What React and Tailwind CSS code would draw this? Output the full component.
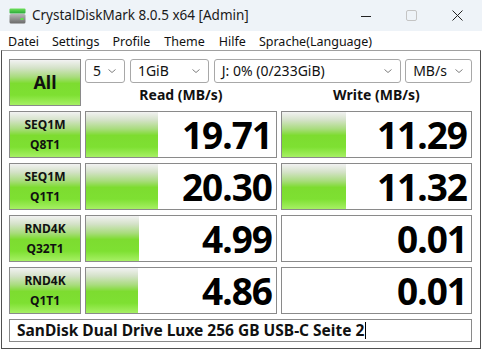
import React from "react";

const GREEN =
  "bg-[linear-gradient(to_bottom,#f2f2f2_0%,#d4e2c8_18%,#a8dc7c_38%,#7ddc30_52%,#7ee032_78%,#a6f064_100%)]";

function Chevron() {
  return (
    <svg width="10" height="6" viewBox="0 0 10 6" className="shrink-0">
      <path d="M1.5 1.5 L5 4.5 L8.5 1.5" fill="none" stroke="#707070" strokeWidth="0.9" />
    </svg>
  );
}

function Select({ w, label }) {
  return (
    <div
      className={`${w} h-[24px] flex items-center justify-between pl-[7px] pr-[7px] border border-[#a8a8a8] rounded-[3px] bg-white text-[14px] text-[#111]`}
    >
      <span className="leading-none">{label}</span>
      <Chevron />
    </div>
  );
}

function TestButton({ l1, l2 }) {
  return (
    <div
      className={`w-[72px] h-[47px] border border-[#8a8a8a] ${GREEN} flex flex-col items-center justify-center font-bold text-[12px] leading-[20px] text-[#111]`}
    >
      <span>{l1}</span>
      <span>{l2}</span>
    </div>
  );
}

function Cell({ w, value, bar }) {
  return (
    <div
      className={`${w} h-[47px] relative border border-[#8a8a8a] bg-white flex items-center justify-end pr-[4px]`}
    >
      {bar > 0 && (
        <div className={`absolute left-0 top-0 bottom-0 ${GREEN}`} style={{ width: bar }} />
      )}
      <span className="relative font-bold text-[37px] leading-[40px] tracking-[-1px] text-black">
        {value}
      </span>
    </div>
  );
}

const rows = [
  { l1: "SEQ1M", l2: "Q8T1", r: "19.71", rb: 72, w: "11.29", wb: 64 },
  { l1: "SEQ1M", l2: "Q1T1", r: "20.30", rb: 72, w: "11.32", wb: 64 },
  { l1: "RND4K", l2: "Q32T1", r: "4.99", rb: 53, w: "0.01", wb: 0 },
  { l1: "RND4K", l2: "Q1T1", r: "4.86", rb: 52, w: "0.01", wb: 0 },
];

export default function App() {
  return (
    <div
      className="w-[482px] h-[352px] bg-white flex flex-col overflow-hidden"
      style={{ fontFamily: '"Noto Sans", "Open Sans", sans-serif' }}
    >
      {/* Title bar */}
      <div className="h-[31px] bg-[#eef3f8] flex items-center">
        <svg width="17" height="16" viewBox="0 0 17 16" className="ml-[9px]">
          <defs>
            <linearGradient id="g1" x1="0" y1="0" x2="0" y2="1">
              <stop offset="0" stopColor="#6ee05a" />
              <stop offset="1" stopColor="#2aa83a" />
            </linearGradient>
            <linearGradient id="g2" x1="0" y1="0" x2="0" y2="1">
              <stop offset="0" stopColor="#b8b8b8" />
              <stop offset="1" stopColor="#6a6a6a" />
            </linearGradient>
          </defs>
          <rect x="0.5" y="0.5" width="16" height="5" rx="1" fill="url(#g1)" />
          <rect x="0.5" y="6" width="16" height="9.5" rx="1.5" fill="url(#g2)" />
          <rect x="11.5" y="10" width="3" height="2" fill="#5ee04a" />
        </svg>
        <span className="ml-[6px] text-[13.5px] text-[#1a1a1a] leading-none">
          CrystalDiskMark 8.0.5 x64 [Admin]
        </span>
        <div className="flex-1" />
        <svg width="12" height="12" viewBox="0 0 12 12" className="mr-[34px]">
          <path d="M1 6.5 H11" stroke="#222" strokeWidth="1" />
        </svg>
        <svg width="11" height="11" viewBox="0 0 11 11" className="mr-[35px]">
          <rect x="0.5" y="0.5" width="10" height="10" rx="1.5" fill="none" stroke="#c4c4c4" strokeWidth="1" />
        </svg>
        <svg width="11" height="11" viewBox="0 0 11 11" className="mr-[19px]">
          <path d="M0.5 0.5 L10.5 10.5 M10.5 0.5 L0.5 10.5" stroke="#222" strokeWidth="1" />
        </svg>
      </div>

      {/* Menu bar */}
      <div className="h-[19px] bg-white flex items-center pt-[3px] text-[12.5px] text-[#111] leading-none">
        <span className="ml-[8px]">Datei</span>
        <span className="ml-[13px]">Settings</span>
        <span className="ml-[13px]">Profile</span>
        <span className="ml-[14px]">Theme</span>
        <span className="ml-[14px]">Hilfe</span>
        <span className="ml-[13px]">Sprache(Language)</span>
      </div>

      {/* Client */}
      <div className="mx-[1px] h-[299px] border-t border-t-[#a0a0a0] border-x border-b border-[#505050] bg-white pt-[8px] px-[7px] flex flex-col gap-[5px]">
        {/* header row */}
        <div className="flex gap-[4px] h-[47px]">
          <div
            className={`w-[72px] h-[47px] border border-[#8a8a8a] ${GREEN} flex items-center justify-center font-bold text-[18px] text-[#111]`}
          >
            All
          </div>
          <div className="flex flex-col w-[387px]">
            <div className="flex h-[24px]">
              <Select w="w-[40px]" label="5" />
              <div className="w-[5px]" />
              <Select w="w-[79px]" label="1GiB" />
              <div className="w-[5px]" />
              <Select w="w-[188px]" label="J: 0% (0/233GiB)" />
              <div className="w-[4px]" />
              <Select w="w-[67px]" label="MB/s" />
            </div>
            <div className="flex flex-1 items-center font-bold text-[14px] text-[#111] gap-[4px]">
              <div className="w-[192px] text-center">Read (MB/s)</div>
              <div className="w-[191px] text-center">Write (MB/s)</div>
            </div>
          </div>
        </div>

        {rows.map((r, i) => (
          <div key={i} className="flex gap-[4px]">
            <TestButton l1={r.l1} l2={r.l2} />
            <Cell w="w-[192px]" value={r.r} bar={r.rb} />
            <Cell w="w-[191px]" value={r.w} bar={r.wb} />
          </div>
        ))}

        {/* comment box */}
        <div className="h-[23px] w-[463px] border border-[#8a8a8a] bg-white flex items-center pl-[7px] font-bold text-[15.5px] text-[#111]">
          <span className="leading-none">SanDisk Dual Drive Luxe 256 GB USB-C Seite 2</span>
          <span className="w-[1px] h-[17px] bg-black ml-[1px]" />
        </div>
      </div>
    </div>
  );
}
